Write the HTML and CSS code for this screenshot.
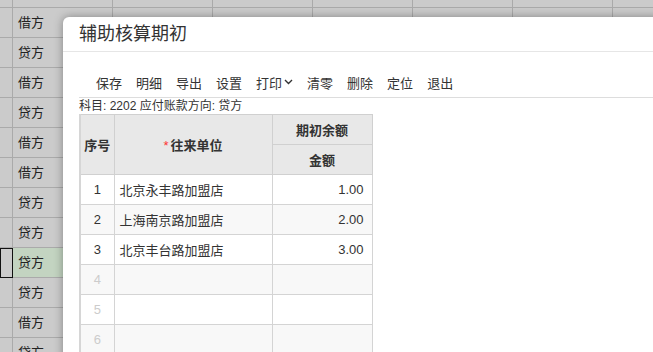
FILE: index.html
```html
<!DOCTYPE HTML>
<html>
<head>
	<meta http-equiv="Content-Type" content="text/html; charset=utf-8">
	<title>辅助核算期初</title>
	<link rel="stylesheet" href="styles.css">
</head>
<body>

<!-- sheet behind the dialog -->
<table class="sheet">
	<colgroup><col class="rh"><col><col><col><col><col><col><col></colgroup>
	<tr class="top"><td class="rh"></td><td></td><td></td><td></td><td></td><td></td><td></td><td></td></tr>
	<tr><td class="rh"></td><td>借方</td><td></td><td></td><td></td><td></td><td></td><td></td></tr>
	<tr><td class="rh"></td><td>贷方</td><td></td><td></td><td></td><td></td><td></td><td></td></tr>
	<tr><td class="rh"></td><td>借方</td><td></td><td></td><td></td><td></td><td></td><td></td></tr>
	<tr><td class="rh"></td><td>贷方</td><td></td><td></td><td></td><td></td><td></td><td></td></tr>
	<tr><td class="rh"></td><td>借方</td><td></td><td></td><td></td><td></td><td></td><td></td></tr>
	<tr><td class="rh"></td><td>借方</td><td></td><td></td><td></td><td></td><td></td><td></td></tr>
	<tr><td class="rh"></td><td>贷方</td><td></td><td></td><td></td><td></td><td></td><td></td></tr>
	<tr><td class="rh"></td><td>贷方</td><td></td><td></td><td></td><td></td><td></td><td></td></tr>
	<tr class="sel"><td class="rh"></td><td>贷方</td><td></td><td></td><td></td><td></td><td></td><td></td></tr>
	<tr><td class="rh"></td><td>贷方</td><td></td><td></td><td></td><td></td><td></td><td></td></tr>
	<tr><td class="rh"></td><td>借方</td><td></td><td></td><td></td><td></td><td></td><td></td></tr>
	<tr><td class="rh"></td><td>贷方</td><td></td><td></td><td></td><td></td><td></td><td></td></tr>
</table>

<div class="dlg">
	<div class="dlg-title">辅助核算期初</div>
	<div class="dlg-body">
		<div class="bar">
			<span class="btn">保存</span>
			<span class="btn">明细</span>
			<span class="btn">导出</span>
			<span class="btn">设置</span>
			<span class="btn">打印<svg class="caret" width="9" height="6" viewBox="0 0 9 6"><path d="M1 1l3.5 3.5L8 1" fill="none" stroke="#333" stroke-width="1.4"/></svg></span>
			<span class="btn">清零</span>
			<span class="btn">删除</span>
			<span class="btn">定位</span>
			<span class="btn">退出</span>
		</div>
		<div class="info">科目: 2202 应付账款方向: 贷方</div>

		<table class="grid">
			<colgroup><col class="c1"><col class="c2"><col class="c3"></colgroup>
			<tr>
				<th rowspan="2">序号</th>
				<th rowspan="2"><span class="req">*</span>往来单位</th>
				<th>期初余额</th>
			</tr>
			<tr><th>金额</th></tr>
			<tr><td class="no">1</td><td>北京永丰路加盟店</td><td class="amt">1.00</td></tr>
			<tr class="alt"><td class="no">2</td><td>上海南京路加盟店</td><td class="amt">2.00</td></tr>
			<tr><td class="no">3</td><td>北京丰台路加盟店</td><td class="amt">3.00</td></tr>
			<tr class="alt"><td class="no off">4</td><td></td><td></td></tr>
			<tr><td class="no off">5</td><td></td><td></td></tr>
			<tr class="alt"><td class="no off">6</td><td></td><td></td></tr>
		</table>
	</div>
</div>

</body>
</html>
```

FILE: styles.css
```css
html, body {
	margin:0;
	height:100%;
	overflow:hidden;
	}
body {
	background:#cbcbcb;
	font-family:"Liberation Sans", "Noto Sans CJK SC", sans-serif;
	color:#333;
	}

/* spreadsheet */
.sheet {
	border-collapse:separate;
	border-spacing:0;
	table-layout:fixed;
	width:713px;
	font-size:13px;
	color:#222;
	}
.sheet col { width:100px; }
.sheet col.rh { width:13px; }
.sheet td {
	border-right:1px solid #aaa;
	border-bottom:1px solid #aaa;
	height:30px;
	line-height:16px;
	padding:0 0 0 5px;
	box-sizing:border-box;
	background:#cbcbcb;
	}
.sheet td.rh {
	padding:0;
	}
.sheet tr.top td {
	height:8px;
	}
.sheet tr.sel td {
	background:#c3d4c1;
	}
.sheet tr.sel td.rh {
	background:#cbcbcb;
	outline:1px solid #111;
	outline-offset:-1px;
	}

/* dialog */
.dlg {
	position:absolute;
	left:63px;
	top:17px;
	right:-20px;
	bottom:-20px;
	background:#fff;
	border-radius:6px 0 0 0;
	box-shadow:0 0 10px rgba(0,0,0,0.35);
	}
.dlg-title {
	height:34px;
	line-height:34px;
	padding-left:16px;
	font-size:18px;
	color:#333;
	border-bottom:1px solid #e6e6e6;
	}
.dlg-body {
	padding-left:16px;
	}
.bar {
	display:flex;
	align-items:center;
	height:20px;
	padding:20px 0 5px 17px;
	border-bottom:1px solid #ddd;
	font-size:13px;
	}
.btn {
	display:flex;
	align-items:center;
	margin-right:14px;
	}
.caret {
	margin:0 0 0 2px;
	}
.info {
	font-size:12px;
	line-height:16px;
	}

/* grid */
.grid {
	border-collapse:collapse;
	table-layout:fixed;
	font-size:13px;
	border-left:2px solid #d6d6d6;
	}
.grid col.c1 { width:34px; }
.grid col.c2 { width:158px; }
.grid col.c3 { width:100px; }
.grid th, .grid td {
	border:1px solid #d4d4d4;
	height:29px;
	padding:0 8px 0 5px;
	}
.grid th {
	background:#e8e8e8;
	font-weight:bold;
	text-align:center;
	border-color:#d0d0d0;
	padding:0;
	}
.grid tr.alt td {
	background:#f8f8f8;
	}
.grid td.no {
	text-align:center;
	padding:0;
	}
.grid td.off {
	color:#ccc;
	}
.grid td.amt {
	text-align:right;
	}
.req {
	color:#f33;
	font-weight:normal;
	margin-right:2px;
	}
```
